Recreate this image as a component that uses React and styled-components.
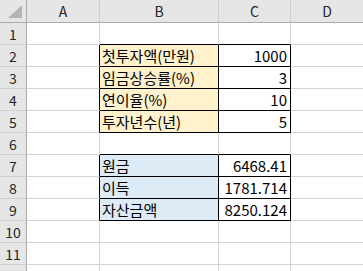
import React from 'react'
import styled, { createGlobalStyle } from 'styled-components'

const Global = createGlobalStyle`
body { margin: 0; background: #fff; }
`

const Sheet = styled.div`
display: grid;
grid-template-columns: 27px 73px 119px 72px 73px;
grid-auto-rows: 22px;
grid-template-rows: 23px;
font-family: "Noto Sans CJK KR", "Noto Sans", sans-serif;
font-size: 15px;
color: #000;
overflow: hidden;
height: 271px;
width: 363px;
`

const Corner = styled.div`
position: relative;
background: #e6e6e6;
border-right: 1px solid #ababab;
border-bottom: 1px solid #ababab;
`

const Triangle = styled.div`
position: absolute;
right: 4px;
bottom: 4px;
width: 0;
height: 0;
border-left: 14px solid transparent;
border-bottom: 13px solid #b5b5b5;
`

const ColHead = styled.div`
background: #e6e6e6;
border-right: 1px solid #d0d0d0;
border-bottom: 1px solid #ababab;
display: flex;
align-items: center;
justify-content: center;
color: #262626;
font-size: 14px;
`

const RowHead = styled.div`
background: #e6e6e6;
border-right: 1px solid #ababab;
border-bottom: 1px solid #d0d0d0;
display: flex;
align-items: center;
justify-content: center;
color: #262626;
font-size: 14px;
`

const Cell = styled.div`
background: ${p => p.fill || '#fff'};
border-right: 1px solid ${p => (p.rb ? '#000' : '#d4d4d4')};
border-bottom: 1px solid ${p => (p.bb ? '#000' : '#d4d4d4')};
display: flex;
align-items: center;
justify-content: ${p => (p.num ? 'flex-end' : 'flex-start')};
padding: 0 3px 0 2px;
white-space: nowrap;
overflow: visible;
line-height: 1;
`

const yellow = '#fff2cc'
const blue = '#ddebf7'

const rows = [
  null,
  ['첫투자액(만원)', '1000', yellow],
  ['임금상승률(%)', '3', yellow],
  ['연이율(%)', '10', yellow],
  ['투자년수(년)', '5', yellow],
  null,
  ['원금', '6468.41', blue],
  ['이득', '1781.714', blue],
  ['자산금액', '8250.124', blue],
  null,
  null,
]

// row indexes (0-based) that sit directly above a table
const aboveTable = [0, 5]

function App() {
  return (
    <>
      <Global />
      <Sheet>
        <Corner><Triangle /></Corner>
        {['A', 'B', 'C', 'D'].map(c => <ColHead key={c}>{c}</ColHead>)}
        {rows.map((r, i) => {
          const above = aboveTable.includes(i)
          return (
            <React.Fragment key={i}>
              <RowHead>{i + 1}</RowHead>
              <Cell rb={!!r} />
              <Cell fill={r && r[2]} rb={!!r} bb={!!r || above}>{r && r[0]}</Cell>
              <Cell num rb={!!r} bb={!!r || above}>{r && r[1]}</Cell>
              <Cell />
            </React.Fragment>
          )
        })}
        {/* partly visible row at the bottom edge */}
        <RowHead />
        <Cell />
        <Cell />
        <Cell />
        <Cell />
      </Sheet>
    </>
  )
}

export default App
